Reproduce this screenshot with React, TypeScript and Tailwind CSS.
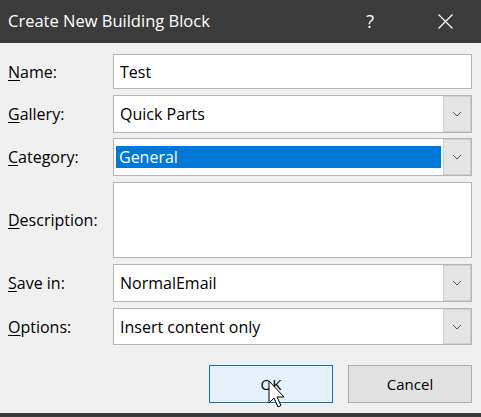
import React from 'react';

const font = { fontFamily: '"Open Sans", "Noto Sans", sans-serif' };

function Label({ k, rest }: { k: string; rest: string }) {
    return (
        <div className="flex items-center pl-2 text-[16px] text-black">
            <span className="underline underline-offset-2">{k}</span>
            {rest}
        </div>
    );
}

function Chevron() {
    return (
        <svg width="10" height="6" viewBox="0 0 10 6" fill="none">
            <path d="M1 1l4 4 4-4" stroke="#555" strokeWidth="1" />
        </svg>
    );
}

function Combo({ value, selected }: { value: string; selected?: boolean }) {
    return (
        <div className="flex h-full border border-[#b4b4b4] bg-white">
            <div className="flex flex-1 items-center pl-[2px] pr-[2px]">
                {selected ? (
                    <div className="flex h-[22px] w-full items-center bg-[#0078d7] pl-[3px] text-[16px] text-white">
                        {value}
                    </div>
                ) : (
                    <div className="pl-[4px] text-[16px] text-black">{value}</div>
                )}
            </div>
            <div className="flex w-[28px] items-center justify-center border border-[#cfcfcf] bg-[#e5e5e5]">
                <Chevron />
            </div>
        </div>
    );
}

export default function App() {
    return (
        <div className="flex h-[417px] w-[481px] flex-col bg-[#f0f0f0]" style={font}>
            <div className="flex h-[43px] items-center bg-[#3b3b3b] text-white">
                <div className="pl-2 text-[16.5px]">Create New Building Block</div>
                <div className="ml-auto mr-[64px] text-[18px]">?</div>
                <svg className="mr-[28px]" width="15" height="15" viewBox="0 0 15 15">
                    <path d="M0.5 0.5l14 14M14.5 0.5l-14 14" stroke="#fff" strokeWidth="1.2" />
                </svg>
            </div>

            <div className="flex flex-1 flex-col pt-[11px]">
                <div className="grid grid-cols-[113px_359px]">
                    <Label k="N" rest="ame:" />
                    <div className="flex h-[35px] items-center border border-[#b4b4b4] bg-white pl-[6px] text-[16px] text-black">
                        Test
                    </div>

                    <div className="col-span-2 h-[6px]" />
                    <Label k="G" rest="allery:" />
                    <div className="h-[38px]">
                        <Combo value="Quick Parts" />
                    </div>

                    <div className="col-span-2 h-[5px]" />
                    <Label k="C" rest="ategory:" />
                    <div className="h-[38px]">
                        <Combo value="General" selected />
                    </div>

                    <div className="col-span-2 h-[6px]" />
                    <Label k="D" rest="escription:" />
                    <div className="h-[76px] border border-[#b4b4b4] bg-white" />

                    <div className="col-span-2 h-[6px]" />
                    <Label k="S" rest="ave in:" />
                    <div className="h-[38px]">
                        <Combo value="NormalEmail" />
                    </div>

                    <div className="col-span-2 h-[6px]" />
                    <Label k="O" rest="ptions:" />
                    <div className="h-[37px]">
                        <Combo value="Insert content only" />
                    </div>
                </div>

                <div className="mt-[20px] flex justify-end gap-[15px] pr-[9px]">
                    <div className="relative flex h-[38px] w-[124px] items-center justify-center border border-[#0078d7] bg-[#e5f1fb] text-[15px] text-black">
                        OK
                        <svg className="absolute left-[58px] top-[14px]" width="20" height="30" viewBox="0 0 20 30">
                            <path
                                d="M1 1v22l5-5 4 9 3-1.5-4-8.5h7z"
                                fill="#fff"
                                stroke="#000"
                                strokeWidth="1"
                                strokeLinejoin="round"
                            />
                        </svg>
                    </div>
                    <div className="flex h-[38px] w-[124px] items-center justify-center border border-[#adadad] bg-[#e1e1e1] text-[15px] text-black">
                        Cancel
                    </div>
                </div>
            </div>

            <div className="h-[4px] bg-[#3b3b3b]" />
        </div>
    );
}
